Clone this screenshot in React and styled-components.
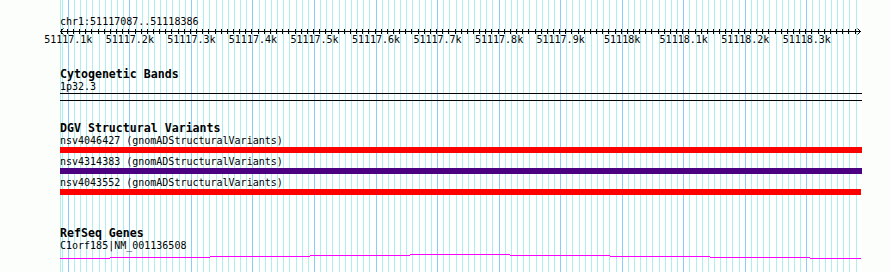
import styled, { createGlobalStyle } from "styled-components";

const START = 51117087;
const END = 51118386;
const LEFT = 60;
const SPAN = 800;
const bpToX = (bp) => LEFT + ((bp - START + 0.5) * SPAN) / (END - START + 1);

const gridStops = [];
for (let bp = 51117090; bp <= 51118380; bp += 10) {
  gridStops.push({ bp, x: Math.floor(bpToX(bp)), major: bp % 100 === 0 });
}

const labelFor = (bp) => {
  const k = bp / 1000;
  return `${Number.isInteger(k) ? k : k.toFixed(1)}k`;
};

const GlobalStyle = createGlobalStyle`
  html, body {
    margin: 0;
    padding: 0;
    background: #fcfefc;
  }
`;

const Viewer = styled.div`
  position: relative;
  width: 890px;
  height: 272px;
  overflow: hidden;
  font-family: "DejaVu Sans Mono", "Liberation Mono", monospace;
  color: #000;
`;

const Grid = styled.svg`
  position: absolute;
  left: 0;
  top: 0;
`;

const Tracks = styled.div`
  position: relative;
`;

const Ruler = styled.svg`
  display: block;
`;

const Track = styled.section`
  padding-left: 60px;
  margin-top: ${(p) => p.$gap}px;
`;

const TrackTitle = styled.div`
  font-weight: bold;
  font-size: 11.6px;
  line-height: 13px;
  height: 13px;
  white-space: pre;
`;

const FeatureLabel = styled.div`
  font-size: 10px;
  line-height: 12px;
  height: 12px;
  white-space: pre;
`;

const Band = styled.div`
  width: 802px;
  height: 6px;
  border-top: 1px solid #000;
  border-bottom: 1px solid #000;
`;

const Bar = styled.div`
  width: ${(p) => p.$w}px;
  height: 6px;
  background: ${(p) => p.$color};
  margin-bottom: 3px;
`;

const Intron = styled.svg`
  display: block;
`;

const variants = [
  { name: "nsv4046427", color: "#ff0000", w: 802 },
  { name: "nsv4314383", color: "#4b0082", w: 802 },
  { name: "nsv4043552", color: "#ff0000", w: 801 },
];

// stepped "hat" line of the gene model, pixel rows taken from the view
const intronSteps = [
  [60, 110, 261],
  [110, 210, 260],
  [210, 310, 259],
  [310, 410, 258],
  [410, 510, 257],
  [510, 610, 258],
  [610, 710, 259],
  [710, 810, 260],
  [810, 861, 261],
];

function RulerTrack() {
  return (
    <Ruler width="890" height="46" shapeRendering="crispEdges">
      <text x="60" y="25" fontSize="10" fontFamily="DejaVu Sans Mono, monospace">
        chr1:51117087..51118386
      </text>
      <rect x="60" y="31" width="801" height="1" fill="#000" />
      <path d="M60.5 31.5 L63.5 28.5 M60.5 31.5 L63.5 34.5" stroke="#000" fill="none" shapeRendering="auto" />
      <path d="M860.5 31.5 L857.5 28.5 M860.5 31.5 L857.5 34.5" stroke="#000" fill="none" shapeRendering="auto" />
      {gridStops.map((g) => (
        <rect key={g.bp} x={g.x - 1} y="29" width="1" height="5" fill="#000" />
      ))}
      {gridStops
        .filter((g) => g.major)
        .map((g) => (
          <text
            key={g.bp}
            x={bpToX(g.bp)}
            y="43"
            fontSize="10"
            textAnchor="middle"
            fontFamily="DejaVu Sans Mono, monospace"
          >
            {labelFor(g.bp)}
          </text>
        ))}
    </Ruler>
  );
}

export default function App() {
  return (
    <>
      <GlobalStyle />
      <Viewer>
        <Grid width="890" height="272" shapeRendering="crispEdges">
          <rect x="60" y="0" width="802" height="272" fill="#ffffff" />
          <rect x="60" y="0" width="1" height="272" fill="#afeeee" />
          {gridStops.map((g) => (
            <rect
              key={g.bp}
              x={g.x}
              y="0"
              width="1"
              height="272"
              fill={g.major ? "#87cefa" : "#afeeee"}
            />
          ))}
        </Grid>
        <Tracks>
          <RulerTrack />

          <Track $gap={22}>
            <TrackTitle>Cytogenetic Bands</TrackTitle>
            <FeatureLabel>1p32.3</FeatureLabel>
            <Band />
          </Track>

          <Track $gap={21}>
            <TrackTitle>DGV Structural Variants</TrackTitle>
            {variants.map((v) => (
              <div key={v.name}>
                <FeatureLabel>{`${v.name} (gnomADStructuralVariants)`}</FeatureLabel>
                <Bar $color={v.color} $w={v.w} />
              </div>
            ))}
          </Track>

          <Track $gap={32}>
            <TrackTitle>RefSeq Genes</TrackTitle>
            <FeatureLabel>C1orf185|NM_001136508</FeatureLabel>
            <Intron width="802" height="8" shapeRendering="crispEdges">
              {intronSteps.map(([x1, x2, row]) => (
                <rect key={x1} x={x1 - 60} y={row - 255} width={x2 - x1} height="1" fill="#ff00ff" />
              ))}
            </Intron>
          </Track>
        </Tracks>
      </Viewer>
    </>
  );
}
